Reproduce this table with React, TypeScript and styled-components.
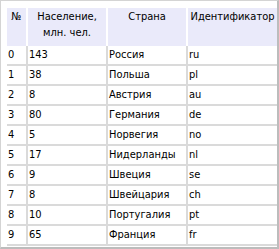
import React from "react";
import styled, { createGlobalStyle } from "styled-components";

const Global = createGlobalStyle`
  html, body { margin: 0; padding: 0; background: #ffffff; }
`;

const Frame = styled.div`
  box-sizing: border-box;
  width: 279px;
  height: 249px;
  overflow: hidden;
  background: #ffffff;
  border-top: 1px solid #d4d4d4;
  border-left: 1px solid #d4d4d4;
  border-right: 2px solid #bcbcbc;
  border-bottom: 2px solid #bcbcbc;
  padding: 7px 0 0 6px;
  font-family: "DejaVu Sans Condensed", "DejaVu Sans", Verdana, sans-serif;
  font-size: 11px;
  color: #000000;
`;

const Table = styled.table`
  border-collapse: separate;
  border-spacing: 0;
  table-layout: fixed;
  width: 270px;
`;

const Col = styled.col<{ $w: number }>`
  width: ${(p) => p.$w}px;
`;

const HeadCell = styled.th<{ $last?: boolean }>`
  background: #eaeafa;
  font-weight: normal;
  text-align: center;
  vertical-align: top;
  height: 38px;
  box-sizing: border-box;
  padding: 1px 1px 0 1px;
  line-height: 16px;
  border-right: ${(p) => (p.$last ? "none" : "2px solid #ffffff")};
  white-space: nowrap;
  overflow: hidden;
`;

const Cell = styled.td<{ $last?: boolean }>`
  height: 20px;
  box-sizing: border-box;
  padding: 0 1px 0 1px;
  line-height: 18px;
  vertical-align: middle;
  border-right: ${(p) => (p.$last ? "none" : "2px solid #dadada")};
  border-bottom: 2px solid #dadada;
  white-space: nowrap;
  overflow: hidden;
`;

const rows: [number, string, string][] = [
  [143, "Россия", "ru"],
  [38, "Польша", "pl"],
  [8, "Австрия", "au"],
  [80, "Германия", "de"],
  [5, "Норвегия", "no"],
  [17, "Нидерланды", "nl"],
  [9, "Швеция", "se"],
  [8, "Швейцария", "ch"],
  [10, "Португалия", "pt"],
  [65, "Франция", "fr"],
];

export default function App() {
  return (
    <>
      <Global />
      <Frame>
        <Table>
          <colgroup>
            <Col $w={21} />
            <Col $w={80} />
            <Col $w={80} />
            <Col $w={89} />
          </colgroup>
          <thead>
            <tr>
              <HeadCell>№</HeadCell>
              <HeadCell>
                Население,
                <br />
                млн. чел.
              </HeadCell>
              <HeadCell>Страна</HeadCell>
              <HeadCell $last>Идентификатор</HeadCell>
            </tr>
          </thead>
          <tbody>
            {rows.map(([pop, country, id], i) => (
              <tr key={id}>
                <Cell>{i}</Cell>
                <Cell>{pop}</Cell>
                <Cell>{country}</Cell>
                <Cell $last>{id}</Cell>
              </tr>
            ))}
          </tbody>
        </Table>
      </Frame>
    </>
  );
}
